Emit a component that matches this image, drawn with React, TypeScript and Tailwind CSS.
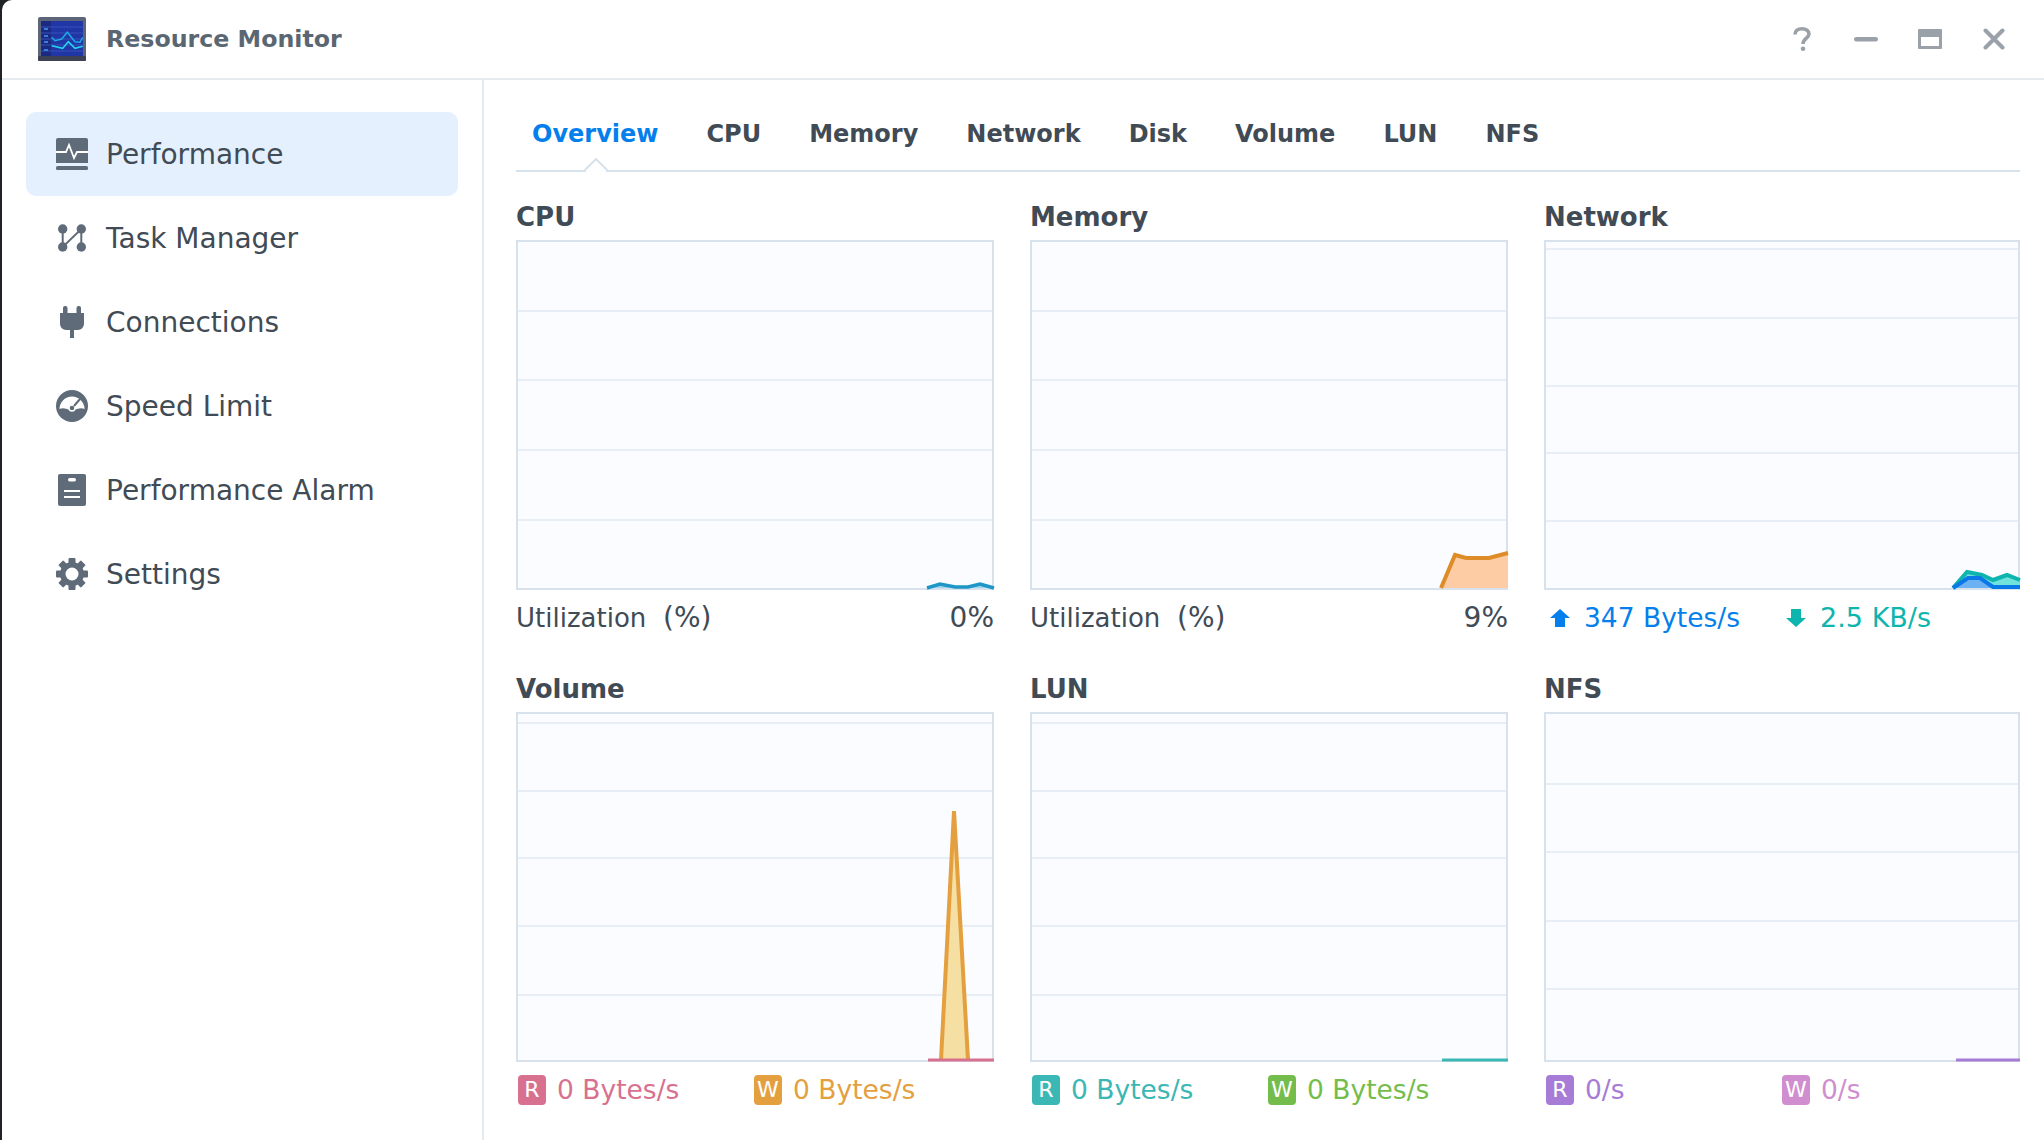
import React from 'react';

const font = "font-['DejaVu_Sans',sans-serif]";

function AppIcon() {
  return (
    <svg width="50" height="46" viewBox="0 0 50 46" className="shrink-0">
      <rect x="1" y="1" width="48" height="44" rx="2" fill="#5d6579" />
      <rect x="1" y="40" width="48" height="5" rx="1" fill="#3c4254" />
      <rect x="4" y="5" width="42" height="35" fill="#2036a4" />
      <rect x="4" y="5" width="10" height="35" fill="#1a2a80" />
      <path d="M4 11H46M4 17H46M4 23H46M4 29H46M4 35H46" stroke="#3550b8" strokeWidth="1" />
      <path d="M7 13H11M7 20H11M7 26H11M7 34H11" stroke="#3f7ae0" strokeWidth="2" />
      <path d="M14.7 21.3L18 24.7L24.7 23L30.3 16.3L38 25.7L43 26.3L45.7 21.3" fill="none" stroke="#1fa9e6" strokeWidth="1.5" />
      <path d="M14.7 29.7L25.7 32.3L31.3 25.7L38 32.3L45.7 30.3" fill="none" stroke="#25d3ee" strokeWidth="1.5" />
    </svg>
  );
}

function PerfIcon() {
  return (
    <svg width="32" height="32" viewBox="0 0 32 32">
      <path d="M2 0H30A2 2 0 0 1 32 2V25H0V2A2 2 0 0 1 2 0Z" fill="#5f6b78" />
      <rect x="0" y="28" width="32" height="4" rx="1.5" fill="#5f6b78" />
      <path d="M0 14H10L13 7L18 20L21 14H32" fill="none" stroke="#fff" strokeWidth="1.8" />
    </svg>
  );
}

function TaskIcon() {
  return (
    <svg width="32" height="32" viewBox="0 0 32 32" fill="#5f6b78">
      <circle cx="6.7" cy="7" r="4.7" />
      <circle cx="25.3" cy="7" r="4.7" />
      <circle cx="6.7" cy="25" r="4.7" />
      <circle cx="25.3" cy="25" r="4.7" />
      <path d="M6.7 7V25L25.3 7V25" fill="none" stroke="#5f6b78" strokeWidth="2" />
    </svg>
  );
}

function PlugIcon() {
  return (
    <svg width="32" height="32" viewBox="0 0 32 32" fill="#5f6b78">
      <rect x="7" y="0" width="4.5" height="10" rx="2" />
      <rect x="20.5" y="0" width="4.5" height="10" rx="2" />
      <path d="M4 7H28V18A6 6 0 0 1 22 24H18V32H14V24H10A6 6 0 0 1 4 18Z" />
    </svg>
  );
}

function SpeedIcon() {
  return (
    <svg width="32" height="32" viewBox="0 0 32 32">
      <circle cx="16" cy="16" r="16" fill="#5f6b78" />
      <path d="M3.5 19A12.5 12.5 0 0 1 28.5 19C24 17 21 20 16 20C11 20 8 17 3.5 19Z" fill="#fff" />
      <circle cx="16" cy="18" r="3" fill="#5f6b78" stroke="#fff" strokeWidth="1.4" />
      <path d="M18 16L24 9" stroke="#5f6b78" strokeWidth="2" />
    </svg>
  );
}

function AlarmIcon() {
  return (
    <svg width="32" height="32" viewBox="0 0 32 32">
      <rect x="2" y="0" width="28" height="32" rx="2" fill="#5f6b78" />
      <rect x="12" y="4" width="8" height="3.5" rx="1.7" fill="#fff" />
      <rect x="8" y="16" width="16" height="2" fill="#fff" />
      <rect x="8" y="22" width="16" height="2" fill="#fff" />
    </svg>
  );
}

function GearIcon() {
  return (
    <svg width="32" height="32" viewBox="0 0 32 32" fill="#5f6b78">
      <g>
        <rect x="12.5" y="0" width="7" height="32" rx="1" />
        <rect x="12.5" y="0" width="7" height="32" rx="1" transform="rotate(45 16 16)" />
        <rect x="12.5" y="0" width="7" height="32" rx="1" transform="rotate(90 16 16)" />
        <rect x="12.5" y="0" width="7" height="32" rx="1" transform="rotate(135 16 16)" />
      </g>
      <circle cx="16" cy="16" r="12" />
      <circle cx="16" cy="16" r="6.5" fill="#fff" />
    </svg>
  );
}

const navItems = [
  { label: 'Performance', icon: <PerfIcon />, active: true },
  { label: 'Task Manager', icon: <TaskIcon /> },
  { label: 'Connections', icon: <PlugIcon /> },
  { label: 'Speed Limit', icon: <SpeedIcon /> },
  { label: 'Performance Alarm', icon: <AlarmIcon /> },
  { label: 'Settings', icon: <GearIcon /> },
];

const tabs = ['Overview', 'CPU', 'Memory', 'Network', 'Disk', 'Volume', 'LUN', 'NFS'];

// grid rows are measured from the top of the inner chart area, 346px high
function Chart({ lines, children }: { lines: number[]; children?: React.ReactNode }) {
  return (
    <div className="h-[350px] border-2 border-[#d8e2ec] bg-[#fbfcff]">
      <svg width="100%" height="346" className="block overflow-visible">
        {lines.map((y) => (
          <rect key={y} x="0" y={y} width="100%" height="2" fill="#e8eef5" />
        ))}
        {children}
      </svg>
    </div>
  );
}

function Heading({ text }: { text: string }) {
  return <h3 className="text-[26px] font-bold leading-[32px] text-[#414b55]">{text}</h3>;
}

function Utilization({ value }: { value: string }) {
  return (
    <div className="mt-[11px] flex h-[34px] items-center text-[26px] text-[#414b55]">
      <span className="w-[147px]">Utilization</span>
      <span className="text-[28px]">(%)</span>
      <span className="ml-auto text-[28px]">{value}</span>
    </div>
  );
}

function Metric({ letter, value, bg, color, width }: { letter: string; value: string; bg: string; color: string; width: string }) {
  return (
    <div className={`flex items-center gap-[11px] ${width}`}>
      <span className={`flex h-[30px] w-[28px] items-center justify-center rounded-[4px] text-[22px] leading-none text-white ${bg}`}>
        {letter}
      </span>
      <span className={color}>{value}</span>
    </div>
  );
}

export default function App() {
  return (
    <div className={`flex h-[1140px] w-[2044px] flex-col overflow-hidden bg-[#1f2328] ${font}`}>
      <div className="ml-[2px] flex h-full flex-col overflow-hidden rounded-tl-[10px] bg-white">
        {/* title bar */}
        <div className="flex h-[80px] shrink-0 items-center border-b-2 border-[#e6ebf1] pl-[35px] pr-[38px]">
          <AppIcon />
          <span className="ml-[19px] pt-[2px] text-[23.7px] font-bold text-[#5a6672]">Resource Monitor</span>
          <div className="ml-auto flex items-center gap-[40px] text-[#9aa1a9]">
            <span className="flex w-[24px] justify-center">
              <svg width="18" height="24" viewBox="0 0 18 24" fill="none" stroke="currentColor" strokeWidth="3.6">
                <path d="M2 7.5C2 3.5 5 1.8 9 1.8C13 1.8 16 3.8 16 7C16 11 10 11.5 10 17" />
                <circle cx="10" cy="21.7" r="2.3" fill="currentColor" stroke="none" />
              </svg>
            </span>
            <svg width="24" height="24" viewBox="0 0 24 24">
              <rect x="0" y="10" width="24" height="4.5" rx="2.2" fill="currentColor" />
            </svg>
            <svg width="24" height="20" viewBox="0 0 24 20">
              <path d="M1 0H23A1 1 0 0 1 24 1V19A1 1 0 0 1 23 20H1A1 1 0 0 1 0 19V1A1 1 0 0 1 1 0ZM3 8V17H21V8Z" fill="currentColor" fillRule="evenodd" />
            </svg>
            <span className="flex w-[24px] justify-center">
              <svg width="22" height="22" viewBox="0 0 22 22" stroke="currentColor" strokeWidth="4" strokeLinecap="round">
                <path d="M2.5 2.5L19.5 19.5M19.5 2.5L2.5 19.5" />
              </svg>
            </span>
          </div>
        </div>

        <div className="flex min-h-0 flex-1">
          {/* sidebar */}
          <aside className="w-[482px] shrink-0 border-r-2 border-[#e6ebf1] pl-[24px] pr-[24px] pt-[32px]">
            {navItems.map((item) => (
              <div
                key={item.label}
                className={`flex h-[84px] items-center gap-[18px] rounded-[10px] pl-[30px] text-[28px] text-[#414b55] ${item.active ? 'bg-[#e4f0fd]' : ''}`}
              >
                <span className="flex h-[32px] w-[32px] shrink-0">{item.icon}</span>
                <span className="pt-[2px]">{item.label}</span>
              </div>
            ))}
          </aside>

          {/* main */}
          <main className="min-w-0 flex-1 pl-[32px] pr-[24px]">
            <div className="relative flex h-[92px] items-center gap-[48px] border-b-2 border-[#d8e2ec] pl-[16px] pt-[18px]">
              {tabs.map((t, i) => (
                <span key={t} className={`text-[24px] font-bold ${i === 0 ? 'text-[#057feb]' : 'text-[#414b55]'}`}>
                  {t}
                </span>
              ))}
              <svg width="24" height="14" viewBox="0 0 24 14" className="absolute bottom-[-2px] left-[68px]">
                <path d="M0 13L12 1L24 13" fill="#fff" stroke="#d8e2ec" strokeWidth="2" />
                <rect x="2" y="12" width="20" height="2" fill="#fff" />
              </svg>
            </div>

            <div className="grid grid-cols-[478px_478px_476px] gap-x-[36px]">
              <section className="pt-[29px]">
                <Heading text="CPU" />
                <div className="mt-[7px]">
                  <Chart lines={[68, 137, 207, 277]}>
                    <path d="M409 346L422 342L437 345H450L462 342L476 346Z" fill="#9fd3ea" />
                    <path d="M409 346L422 342L437 345H450L462 342L476 346" fill="none" stroke="#1f96c8" strokeWidth="3.5" />
                  </Chart>
                </div>
                <Utilization value="0%" />
              </section>
              <section className="pt-[29px]">
                <Heading text="Memory" />
                <div className="mt-[7px]">
                  <Chart lines={[68, 137, 207, 277]}>
                    <path d="M409 346L423 313L434 316L457 316L476 311V346Z" fill="#fdcba4" />
                    <path d="M409 346L423 313L434 316L457 316L476 311" fill="none" stroke="#de8c28" strokeWidth="4" />
                  </Chart>
                </div>
                <Utilization value="9%" />
              </section>
              <section className="pt-[29px]">
                <Heading text="Network" />
                <div className="mt-[7px]">
                  <Chart lines={[6, 75, 143, 210, 278]}>
                    <path d="M407 346L421 330L436 333L447 338L461 333L474 338V346Z" fill="#6fe3dc" />
                    <path d="M407 346L421 330L436 333L447 338L461 333L474 338" fill="none" stroke="#0eb5ae" strokeWidth="4" />
                    <path d="M407 346L422 336H434L447 346H474Z" fill="#6cb2f3" />
                    <path d="M407 346L422 336H434L447 345H474" fill="none" stroke="#0b78e8" strokeWidth="4" />
                  </Chart>
                </div>
                <div className="mt-[11px] flex h-[34px] items-center gap-[46px] pl-[6px] text-[26.5px]">
                  <div className="flex items-center gap-[14px] text-[#057feb]">
                    <svg width="20" height="18" viewBox="0 0 20 18"><path d="M10 0L20 9H15V18H5V9H0Z" fill="currentColor" /></svg>
                    347 Bytes/s
                  </div>
                  <div className="flex items-center gap-[14px] text-[27px] text-[#0eb5ae]">
                    <svg width="20" height="18" viewBox="0 0 20 18"><path d="M10 18L20 9H15V0H5V9H0Z" fill="currentColor" /></svg>
                    2.5 KB/s
                  </div>
                </div>
              </section>

              <section className="pt-[38px]">
                <Heading text="Volume" />
                <div className="mt-[7px]">
                  <Chart lines={[8, 76, 143, 211, 280]}>
                    <path d="M423 346L436 97L450 346Z" fill="#f5dfa3" />
                    <path d="M423 346L436 97L450 346" fill="none" stroke="#e49f3f" strokeWidth="4" />
                    <path d="M410 346H476" stroke="#d8718f" strokeWidth="3" />
                  </Chart>
                </div>
                <div className="mt-[11px] flex h-[34px] items-center pl-[2px] text-[26.5px]">
                  <Metric letter="R" value="0 Bytes/s" bg="bg-[#d8718f]" color="text-[#d8718f]" width="w-[236px]" />
                  <Metric letter="W" value="0 Bytes/s" bg="bg-[#e49f3f]" color="text-[#e49f3f]" width="" />
                </div>
              </section>
              <section className="pt-[38px]">
                <Heading text="LUN" />
                <div className="mt-[7px]">
                  <Chart lines={[8, 76, 143, 211, 280]}>
                    <path d="M410 346H476" stroke="#3bb7b5" strokeWidth="3" />
                  </Chart>
                </div>
                <div className="mt-[11px] flex h-[34px] items-center pl-[2px] text-[26.5px]">
                  <Metric letter="R" value="0 Bytes/s" bg="bg-[#3bb7b5]" color="text-[#3bb7b5]" width="w-[236px]" />
                  <Metric letter="W" value="0 Bytes/s" bg="bg-[#74bd4c]" color="text-[#74bd4c]" width="" />
                </div>
              </section>
              <section className="pt-[38px]">
                <Heading text="NFS" />
                <div className="mt-[7px]">
                  <Chart lines={[69, 137, 206, 274]}>
                    <path d="M410 346H474" stroke="#a67cd6" strokeWidth="3" />
                  </Chart>
                </div>
                <div className="mt-[11px] flex h-[34px] items-center pl-[2px] text-[26.5px]">
                  <Metric letter="R" value="0/s" bg="bg-[#a67cd6]" color="text-[#a67cd6]" width="w-[236px]" />
                  <Metric letter="W" value="0/s" bg="bg-[#d08ed0]" color="text-[#d08ed0]" width="" />
                </div>
              </section>
            </div>
          </main>
        </div>
      </div>
    </div>
  );
}
